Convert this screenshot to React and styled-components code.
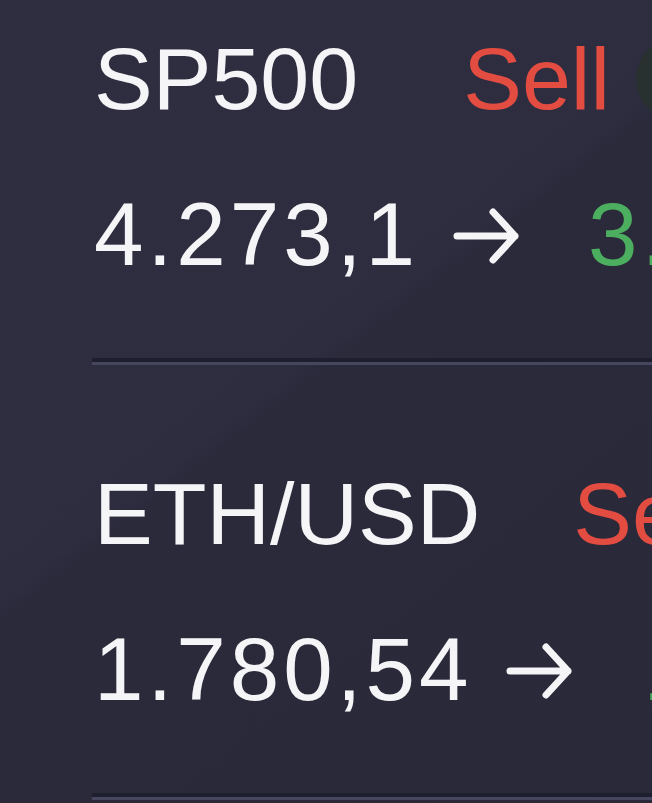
import React from "react";
import styled, { createGlobalStyle } from "styled-components";

const Global = createGlobalStyle`
  html, body {
    margin: 0;
    padding: 0;
    width: 100%;
    height: 100%;
    overflow: hidden;
  }
  body {
    background: #2b2a3b;
    font-family: "Liberation Sans", Arial, sans-serif;
    -webkit-font-smoothing: antialiased;
  }
`;

const Screen = styled.div`
  width: 652px;
  height: 803px;
  overflow: hidden;
  background: linear-gradient(
    142deg,
    #2f2e41 0%,
    #2e2d40 45.5%,
    #2b2a3b 47.5%,
    #2a2939 100%
  );
`;

const List = styled.div`
  display: flex;
  flex-direction: column;
  margin-top: -70px;
`;

const Row = styled.div`
  display: flex;
  flex-direction: column;
  padding: 105px 0 0 94px;
`;

const Line = styled.div`
  display: flex;
  align-items: center;
  white-space: nowrap;
  height: 88px;
  line-height: 88px;
  margin-top: ${(p) => p.$offset || 0}px;
`;

const Name = styled.span`
  font-size: 88px;
  color: #f5f5f7;
  margin-right: ${(p) => p.$gap}px;
`;

const Side = styled.span`
  font-size: 88px;
  color: ${(p) => (p.$side === "Sell" ? "#e34c40" : "#4cae5f")};
`;

const Badge = styled.span`
  flex: none;
  width: 84px;
  height: 84px;
  border-radius: 50%;
  margin-left: 26px;
  background: #283130;
`;

const Price = styled.span`
  font-size: 89px;
  letter-spacing: 4px;
  color: ${(p) => (p.$target ? "#4cae5f" : "#f5f5f7")};
`;

const ArrowWrap = styled.span`
  display: inline-flex;
  flex: none;
  margin: 0 ${(p) => p.$right}px 0 ${(p) => p.$left}px;
  padding-top: 4px;
`;

const Divider = styled.div`
  margin: 80px 0 0 -2px;
  height: 3px;
  background: #47465f;
  border-top: 4px solid #1f1e2e;
`;

const Arrow = () => (
  <svg width="66" height="56" viewBox="0 0 66 56" fill="none">
    <path
      d="M4 28 H62 M40 4 L62 28 L40 52"
      stroke="#f5f5f7"
      strokeWidth="7"
      strokeLinecap="round"
      strokeLinejoin="round"
    />
  </svg>
);

const rows = [
  { name: "SP500", side: "Sell", gap: 105, price: "4.273,1", target: "3.950,0", arrowLeft: 34, arrowRight: 69 },
  { name: "ETH/USD", side: "Sell", gap: 93, price: "1.780,54", target: "1.650,00", arrowLeft: 34, arrowRight: 71 },
];

export default function App() {
  return (
    <>
      <Global />
      <Screen>
        <List>
          {rows.map((r) => (
            <Row key={r.name}>
              <Line>
                <Name $gap={r.gap}>{r.name}</Name>
                <Side $side={r.side}>{r.side}</Side>
                <Badge />
              </Line>
              <Line $offset={67}>
                <Price>{r.price}</Price>
                <ArrowWrap $left={r.arrowLeft} $right={r.arrowRight}>
                  <Arrow />
                </ArrowWrap>
                <Price $target>{r.target}</Price>
              </Line>
              <Divider />
            </Row>
          ))}
        </List>
      </Screen>
    </>
  );
}
